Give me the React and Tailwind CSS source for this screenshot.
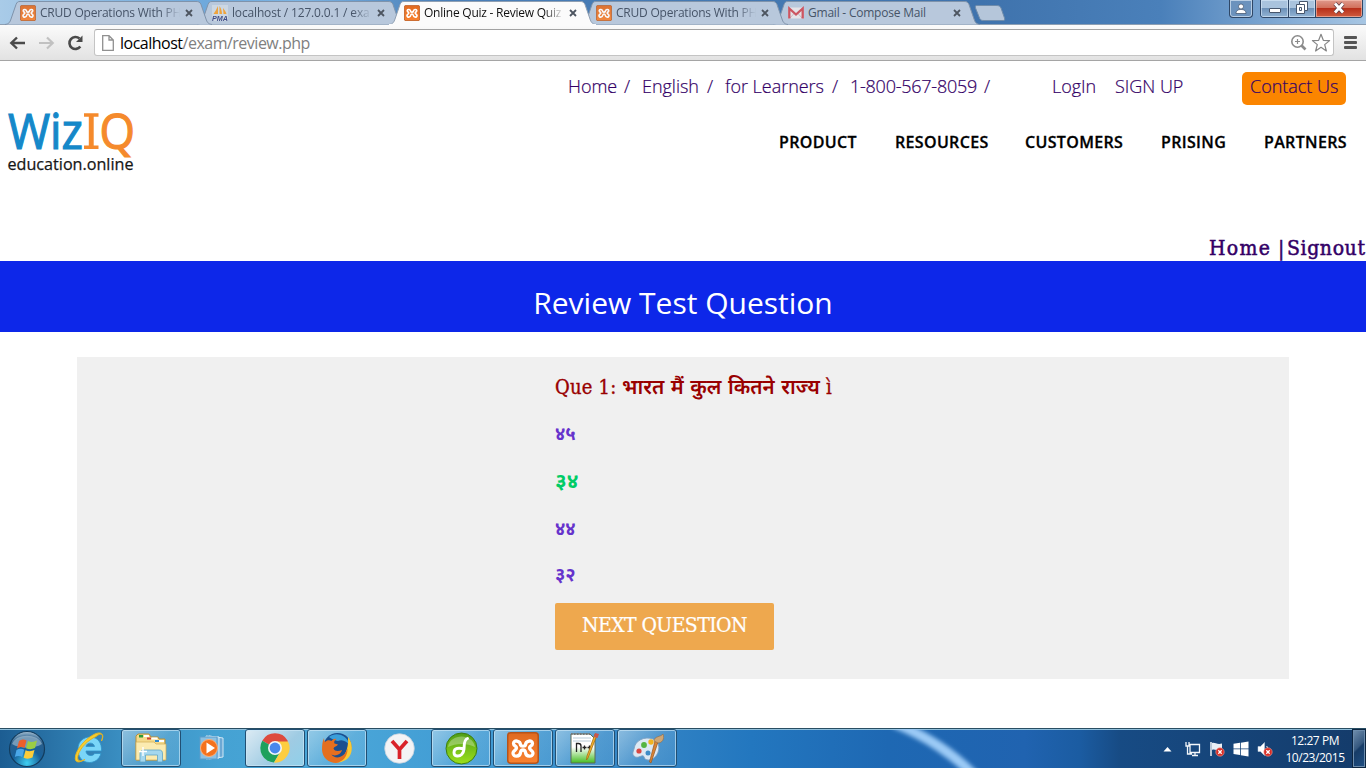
import React from "react";

function XamppIcon({ size }) {
  return (
    <svg width={size} height={size} viewBox="0 0 32 32" className="shrink-0">
      <defs>
        <linearGradient id="xo" x1="0" y1="0" x2="0" y2="1">
          <stop offset="0" stopColor="#e06a20" />
          <stop offset="1" stopColor="#f98230" />
        </linearGradient>
      </defs>
      <rect x="0.75" y="0.75" width="30.5" height="30.5" rx="3" fill="url(#xo)" stroke="#b5541b" strokeWidth="1.5" />
      <path
        d="M13.500 13C13.500 8.500 6.500 7.500 6.500 11.500C6.500 14 9.500 13.800 9.500 16C9.500 18.200 6 18.500 6 21C6 25.500 13 25 13.500 20.500C13.800 18.500 14.500 18 16 18C17.500 18 18.200 18.500 18.500 20.500C19 25 26 25.500 26 21C26 18.500 22.500 18.200 22.500 16C22.500 13.800 25.500 14 25.500 11.500C25.500 7.500 18.500 8.500 18.500 13C18.300 14 17.500 14.200 16 14.200C14.500 14.200 13.700 14 13.500 13"
        fill="none" stroke="#fff" strokeWidth="3.300" strokeLinejoin="round" strokeLinecap="round"
      />
    </svg>
  );
}

function PmaIcon() {
  return (
    <svg width="16" height="16" viewBox="0 0 16 16" className="shrink-0">
      <rect width="16" height="16" fill="#cfd9e4" />
      <path d="M6 1V9H1.500C3 7 4.500 4 6 1ZM7.500 1C9 3 10 6 10 9H7.500ZM11 3C12.500 5 14 7 14.500 9H11.500Z" fill="#f5a02c" />
      <text x="0" y="15.6" fontSize="7" fontWeight="700" fontStyle="italic" fill="#35427f" textLength="16" lengthAdjust="spacingAndGlyphs" fontFamily="Liberation Sans">PMA</text>
    </svg>
  );
}

function GmailIcon() {
  return (
    <svg width="16" height="16" viewBox="0 0 16 16" className="shrink-0">
      <rect x="0.500" y="2.500" width="15" height="11" fill="#e9e6ea" />
      <path d="M2 13L6.500 8M14 13L9.500 8" stroke="#c9a9b3" strokeWidth="0.8" />
      <path d="M1.300 13.500V3.500L8 9.500L14.700 3.500V13.500" fill="none" stroke="#cf4a55" strokeWidth="2.300" />
    </svg>
  );
}

const tabs = [
  { icon: "x", title: "CRUD Operations With PH", z: "z-[5]" },
  { icon: "p", title: "localhost / 127.0.0.1 / exa", z: "z-[4]" },
  { icon: "x", title: "Online Quiz - Review Quiz", active: true, z: "z-[6]" },
  { icon: "x", title: "CRUD Operations With PH", z: "z-[3]" },
  { icon: "g", title: "Gmail - Compose Mail", z: "z-[2]" },
];

function Tab({ icon, title, active, z }) {
  return (
    <div className={"relative w-[192px] h-[25px] flex items-center pl-3 shrink-0 " + z}>
      <svg className="absolute -left-1 top-0" width="212" height="26" viewBox="-4 0 212 26">
        <path
          d="M-3 24.500C1 24 2 22 3 19L8 4.500C9 2 10 1.500 12 1.500H188C190.500 1.500 192 2 193 4.500L198 19C199 22 200 24 204 24.500"
          fill={active ? "#fbfbfb" : "#b8c8dc"} stroke={active ? "#8f9fb2" : "#7f93ab"} strokeWidth="1"
        />
        {active && <rect x="-3" y="24" width="207" height="2" fill="#fbfbfb" />}
      </svg>
      <div className={"relative flex items-center " + (active ? "" : "opacity-90")}>
        {icon === "x" ? <XamppIcon size={16} /> : icon === "p" ? <PmaIcon /> : <GmailIcon />}
      </div>
      <div
        className={
          "relative ml-1 w-[140px] overflow-hidden whitespace-nowrap text-[12px] leading-[18px] " +
          (active ? "text-[#111] tracking-[-0.24px]" : icon === "p" ? "text-[#465468] tracking-[-0.16px]" : "text-[#465468] tracking-[-0.22px]") +
          (icon === "g" ? "" : " [mask-image:linear-gradient(90deg,#000_86%,transparent)]")
        }
      >
        {title}
      </div>
      <svg className="relative ml-[5px]" width="8" height="8" viewBox="0 0 8 8">
        <path d="M1 1L7 7M7 1L1 7" stroke="#4d5560" strokeWidth="1.800" />
      </svg>
    </div>
  );
}

function BrowserChrome() {
  return (
    <div className="h-[61px] font-['Open_Sans','Noto_Sans',sans-serif]">
      <div className="h-[24px] flex pl-2 bg-[linear-gradient(90deg,#a9cbe8_0,#6fa9dc_15%,#7db5e4_22%,#4a7fb8_32%,#3f73ad_72%,#4a80ba_85%,#8fb4da_96%,#a7c6e3_100%)]">
        {tabs.map((t, i) => <Tab key={i} {...t} />)}
        <svg className="mt-[4px] ml-[6px]" width="32" height="18" viewBox="0 0 32 18">
          <path d="M3 1.500H22C25 1.500 26 2 27 4L30.500 14C31 16 30.500 16.500 29 16.500H10C7.500 16.500 6 16 5.500 14L1.500 4C1 2 1.500 1.500 3 1.500Z" fill="#b5c6da" stroke="#6f8cab" />
        </svg>
        <div className="ml-auto mr-[3px] flex">
          <div className="w-6 h-[18px] mr-[7px] rounded-b-[4px] border border-t-0 border-[#2f4766] shadow-[inset_0_0_0_1px_#b7cde4] bg-[#6b92bd] flex items-center justify-center">
            <svg width="12" height="12" viewBox="0 0 12 12">
              <circle cx="6" cy="3.500" r="2.500" fill="#fff" stroke="#3b4c66" strokeWidth="0.700" />
              <path d="M1 10.500C1 7 4 6.500 6 6.500S11 7 11 10.500Z" fill="#fff" stroke="#3b4c66" strokeWidth="0.700" />
            </svg>
          </div>
          <div className="flex w-[103px] h-[18px] rounded-b-[4px] border border-t-0 border-[#2f4766] overflow-hidden">
            <div className="w-[28px] border-r border-[#2f4766] bg-[linear-gradient(#a9c3dd_45%,#6d91b8_50%,#93b4d4)] shadow-[inset_0_0_0_1px_rgba(220,235,250,0.6)] flex items-center justify-center">
              <div className="w-3 h-[5px] mt-[4px] bg-white border border-[#47566c] rounded-[1px]" />
            </div>
            <div className="w-[27px] border-r border-[#2f4766] bg-[linear-gradient(#a9c3dd_45%,#6d91b8_50%,#93b4d4)] shadow-[inset_0_0_0_1px_rgba(220,235,250,0.6)] flex items-center justify-center">
              <svg width="12" height="13" viewBox="0 0 12 13" className="-mt-[2px]">
                <path d="M3.500 0.500H11.500V9.500H8.500V12.500H0.500V3.500H3.500Z" fill="#fff" stroke="#47566c" />
                <path d="M3.500 6.500H5.500V9.500H3.500ZM3.500 3.500H8.500V9.500" fill="none" stroke="#47566c" />
              </svg>
            </div>
            <div className="flex-1 bg-[linear-gradient(#df9a8c_0,#d2715c_45%,#b8301a_50%,#cf5c3f)] shadow-[inset_0_0_0_1px_rgba(250,200,185,0.6)] flex items-center justify-center">
              <svg width="14" height="12" viewBox="0 0 14 12" className="-mt-[2px]">
                <path d="M3 1.500L11 10.500M11 1.500L3 10.500" stroke="#5b3b44" strokeWidth="4.200" />
                <path d="M3 1.500L11 10.500M11 1.500L3 10.500" stroke="#fff" strokeWidth="2.800" />
              </svg>
            </div>
          </div>
        </div>
      </div>
      <div className="h-[37px] border-t border-t-[#8d9fb3] border-b border-b-[#a5a5a5] bg-[linear-gradient(#fbfbfb,#e2e2e2)] flex items-center">
        <svg className="ml-[9px]" width="17" height="14" viewBox="0 0 17 14">
          <path d="M16 7H3M8 1.500L2.300 7L8 12.500" fill="none" stroke="#4a4a4a" strokeWidth="2.400" />
        </svg>
        <svg className="ml-[12px]" width="17" height="14" viewBox="0 0 17 14">
          <path d="M1 7H14M9 1.500L14.700 7L9 12.500" fill="none" stroke="#c1c1c1" strokeWidth="2.200" />
        </svg>
        <svg className="ml-[12px]" width="17" height="16" viewBox="0 0 17 16">
          <path d="M13.300 11.500A6 6 0 1 1 12.500 3.500" fill="none" stroke="#4a4a4a" strokeWidth="2.600" />
          <path d="M15.500 0.500V7H9Z" fill="#4a4a4a" />
        </svg>
        <div className="ml-[10px] w-[1240px] h-[27px] rounded-[3px] border border-[#c4c4c4] border-t-[#a2a2a2] bg-white flex items-center">
          <svg className="ml-[7px]" width="12" height="16" viewBox="0 0 12 16">
            <path d="M0.700 0.700H7L11.300 5V15.300H0.700ZM7 0.700V5H11.300" fill="#fff" stroke="#909090" strokeWidth="1.300" />
          </svg>
          <div className="ml-[6px] text-[16px] leading-[24px] tracking-[-0.5px] text-[#808080] whitespace-nowrap"><span className="text-black">localhost</span>/exam/review.php</div>
          <svg className="ml-auto" width="17" height="17" viewBox="0 0 17 17">
            <circle cx="7.500" cy="7.500" r="5.700" fill="none" stroke="#8b8b8b" strokeWidth="1.600" />
            <path d="M5 7.500H10M7.500 5V10" stroke="#8b8b8b" strokeWidth="1.200" />
            <path d="M11.500 11.500L15.500 15.500" stroke="#8b8b8b" strokeWidth="2.600" />
          </svg>
          <svg className="ml-[4px] mr-[2px]" width="20" height="20" viewBox="0 0 20 20">
            <path d="M10 1.300L12.300 7.300L18.600 7.600L13.700 11.600L15.400 18L10 14.300L4.600 18L6.300 11.600L1.400 7.600L7.700 7.300Z" fill="#fff" stroke="#858585" strokeWidth="1.200" strokeLinejoin="round" />
          </svg>
        </div>
        <div className="ml-[10px] flex flex-col gap-[2px]">
          <div className="w-[13px] h-[3px] rounded-[1px] bg-[#555]" />
          <div className="w-[13px] h-[3px] rounded-[1px] bg-[#555]" />
          <div className="w-[13px] h-[3px] rounded-[1px] bg-[#555]" />
        </div>
      </div>
    </div>
  );
}

function Logo() {
  return (
    <svg width="136" height="64" viewBox="0 0 136 64" className="shrink-0">
      <g fontFamily="Open Sans, Noto Sans, sans-serif" fontSize="50">
        <text x="8" y="38" fill="#1588c9" stroke="#1588c9" strokeWidth="1.200" textLength="75" lengthAdjust="spacingAndGlyphs">Wiz</text>
        <path d="M84 2.300H98.500V5.700H93.700V34.600H98.500V38H84V34.600H88.800V5.700H84Z" fill="#f58a2c" />
        <text x="99.500" y="38" fill="#f58a2c" stroke="#f58a2c" strokeWidth="1.200" textLength="35.500" lengthAdjust="spacingAndGlyphs">Q</text>
        <text x="7.500" y="59" fontSize="16.500" fill="#161616" stroke="#161616" strokeWidth="0.250" textLength="126" lengthAdjust="spacingAndGlyphs">education.online</text>
      </g>
    </svg>
  );
}

function Header() {
  return (
    <header className="h-[200px] flex flex-col">
      <div className="h-[50px] flex pt-[11px] pl-[568px] font-['Open_Sans','Noto_Sans',sans-serif] font-light text-[18px] leading-[28px] tracking-[-0.02px] text-[#330066] [-webkit-text-stroke:0.2px_#330066] whitespace-nowrap">
        <span className="w-[56px]">Home</span><span className="w-[18px]">/</span>
        <span className="w-[65px]">English</span><span className="w-[18px]">/</span>
        <span className="w-[107px]">for Learners</span><span className="w-[18px]">/</span>
        <span className="w-[134px] tracking-[-0.24px]">1-800-567-8059</span><span className="w-[68px]">/</span>
        <span className="w-[63px]">LogIn</span>
        <span className="w-[127px]">SIGN UP</span>
        <a className="w-[104px] h-[33px] rounded-[5px] bg-[#fb8500] pl-2">Contact Us</a>
      </div>
      <div className="flex h-[66px]">
        <Logo />
        <nav className="ml-[643px] pt-[18px] flex font-['Open_Sans','Noto_Sans',sans-serif] font-semibold text-[16px] leading-[26px] tracking-[0.34px] text-black [-webkit-text-stroke:0.3px_#000] whitespace-nowrap">
          <span className="w-[116px]">PRODUCT</span>
          <span className="w-[130px]">RESOURCES</span>
          <span className="w-[136px]">CUSTOMERS</span>
          <span className="w-[103px]">PRISING</span>
          <span>PARTNERS</span>
        </nav>
      </div>
      <div className="mt-auto h-[28px] pl-[1209px] flex font-['DejaVu_Serif_Condensed','DejaVu_Serif',serif] text-[21px] leading-[30px] tracking-[0.9px] text-[#330066] [-webkit-text-stroke:0.5px_#330066] whitespace-nowrap">
        <span className="w-[69px] tracking-[1.300px]">Home</span><span className="w-[9px]">|</span><span className="tracking-[0.6px]">Signout</span>
      </div>
    </header>
  );
}

const answers = [
  { text: "४५", cls: "h-[47px] text-[18.500px] text-[#6633cc]" },
  { text: "३४", cls: "h-[48px] text-[21px] text-[#00cc66]" },
  { text: "४४", cls: "h-[47px] text-[18.500px] text-[#6633cc]" },
  { text: "३२", cls: "h-[45px] text-[18.500px] text-[#6633cc]" },
];

function Quiz() {
  return (
    <>
      <div className="h-[71px] bg-[#0d27e9] flex justify-center pt-[21px] font-['Open_Sans','Noto_Sans',sans-serif] text-[30px] leading-[42px] text-white whitespace-nowrap">
        Review Test Question
      </div>
      <div className="mt-[25px] ml-[77px] w-[1212px] h-[322px] bg-[#f0f0f0] pl-[478px] pt-[16px] flex flex-col">
        <div className="h-[38px] flex leading-[28px] text-[20px] text-[#990000] whitespace-nowrap">
          <span className="w-[67px] tracking-[0.2px] [-webkit-text-stroke:0.35px_#990000] font-['DejaVu_Serif_Condensed','DejaVu_Serif',serif]">Que 1:</span>
          <span className="w-[204px] pt-[2px] text-[20.500px] [word-spacing:1.200px] font-['Noto_Sans_Devanagari','Noto_Sans',sans-serif] font-semibold">भारत मैं कुल कितने राज्य</span>
          <span className="[-webkit-text-stroke:0.35px_#990000] font-['DejaVu_Serif_Condensed','DejaVu_Serif',serif]">ì</span>
        </div>
        {answers.map((a) => (
          <div key={a.text} className={"flex items-center pt-[3px] font-bold font-['Noto_Sans_Devanagari','Noto_Sans',sans-serif] " + a.cls}>{a.text}</div>
        ))}
        <button className="mt-[5px] w-[219px] h-[47px] shrink-0 rounded-[2px] bg-[#eea84e] text-white font-['DejaVu_Serif_Condensed','DejaVu_Serif',serif] text-[21px] tracking-[-0.6px] [-webkit-text-stroke:0.2px_#fff] leading-[28px] pb-[3px] whitespace-nowrap">
          NEXT QUESTION
        </button>
      </div>
    </>
  );
}

const StartOrb = () => (
  <svg width="38" height="38" viewBox="0 0 38 38">
    <defs>
      <radialGradient id="orb" cx="0.500" cy="0.900" r="0.900">
        <stop offset="0" stopColor="#3fd0f2" /><stop offset="0.450" stopColor="#17609a" /><stop offset="0.800" stopColor="#2a5f8c" /><stop offset="1" stopColor="#a9c3d6" />
      </radialGradient>
    </defs>
    <circle cx="19" cy="19" r="17.500" fill="url(#orb)" stroke="#123c5e" strokeWidth="1.200" />
    <path d="M4 14C8 3 30 3 34 14C26 19 12 19 4 14Z" fill="#d5e4ee" opacity="0.450" />
    <path d="M11 11C14 9 16 9 18.500 10.500L16.500 18C14 16.500 12 17 9 18.500Z" fill="#ec5f2c" />
    <path d="M20 11C23 12.500 26 12 29 10.500L27 18C24 19.500 21 19.500 18 18.200Z" fill="#9bcd44" />
    <path d="M8.500 20C11 18.500 14 18.500 16.200 19.700L14.200 27C12 25.500 9 25.500 6.800 27Z" fill="#4aa7e8" />
    <path d="M17.600 20.200C20 21.500 23.500 21.500 26.500 20L24.500 27.500C21.500 29 18.500 29 15.600 27.700Z" fill="#fbcd3a" />
  </svg>
);

const IeIcon = () => (
  <svg width="34" height="34" viewBox="0 0 34 34">
    <path d="M6 18C6 10 12 6 18 6C26 6 30 12 29.500 20H14C14 25 21 26 22.500 22.500H29C27 29 22 31.500 17.500 31.500C10 31.500 6 26 6 18ZM14 15.500H22.500C22 11 14.500 11 14 15.500Z" fill="#7ad6f8" stroke="#2f93c9" strokeWidth="0.800" fillRule="evenodd" />
    <path d="M24 5.500C29 1 33 3 29.500 10C33 0 26 1 21 4C12 9 5 18 3.500 25C2 33 8 31.500 13 28.500C8 31 4.500 30.500 6 24.500C8 17 16 9 24 5.500Z" fill="#f8cf2d" stroke="#e3b324" strokeWidth="1" />
  </svg>
);

const FolderIcon = () => (
  <svg width="34" height="30" viewBox="0 0 34 30">
    <path d="M2 3L4 1H15L17 4H24L25 6H31V27H2Z" fill="#f4da8b" stroke="#b88e38" />
    <rect x="5" y="2" width="4" height="2.500" fill="#2b9b39" /><rect x="10" y="2" width="5" height="2" fill="#fff" />
    <rect x="13" y="4.500" width="4" height="2" fill="#cf4135" /><rect x="17.500" y="4.500" width="6" height="2" fill="#fff" />
    <rect x="21" y="7" width="4" height="2" fill="#2e88ce" /><rect x="25" y="7" width="5" height="2" fill="#fff" />
    <path d="M2 9H20L22 11H32V27H2Z" fill="#fbebb0" stroke="#d1ac54" strokeWidth="0.700" />
    <path d="M6 29V21C6 17.500 8 17 11 17H25C27.500 17 28.500 18 28.500 21V29H23.500V22H11.500V29Z" fill="#a4d7ee" stroke="#5fa3c5" strokeWidth="0.800" />
    <path d="M9 14V23M5 18.500H13" stroke="#fff" strokeWidth="1.400" />
  </svg>
);

const MediaIcon = () => (
  <svg width="28" height="26" viewBox="0 0 28 26">
    <path d="M10 1L24 3V22L10 24Z" fill="#6ca8d4" stroke="#d1e8f6" />
    <path d="M7 1L20 2V23L7 24Z" fill="#89bfe2" stroke="#dbeffa" />
    <rect x="1" y="2" width="17" height="22" fill="#8bc0e2" stroke="#5c9cc9" />
    <circle cx="10" cy="13" r="8.500" fill="#f4721d" stroke="#fbb079" />
    <path d="M7.500 7.500L16 13L7.500 18.500Z" fill="#fff" />
  </svg>
);

const ChromeIcon = () => (
  <svg width="30" height="30" viewBox="0 0 30 30">
    <path d="M15 15L2.300 7.700A14.600 14.600 0 0 1 27.700 7.700L27.700 9H15Z" fill="#dd4b3e" />
    <path d="M15 15L2.300 7.700A14.600 14.600 0 0 0 14 29.600L20.500 18.500Z" fill="#1fa15d" />
    <path d="M15 8.500H28A14.600 14.600 0 0 1 14 29.600L20.500 18.500Z" fill="#fdcd40" />
    <circle cx="15" cy="15" r="7" fill="#f3f6fa" /><circle cx="15" cy="15" r="5.400" fill="#4888ee" />
  </svg>
);

const FirefoxIcon = () => (
  <svg width="32" height="32" viewBox="0 0 32 32">
    <circle cx="16.500" cy="15" r="14" fill="#1b4f90" />
    <path d="M8 5C15 -1 27 3 29 14C26 9 21 7 17 9C14 8 12 8 8 5Z" fill="#3a9fda" />
    <path d="M27 5C32 11 32 20 28 25C23 31 15 31 13 30C23 28 28 18 27 5Z" fill="#fbc933" />
    <path d="M3 6C3 8 3.500 9 4 10C6 8 8.500 8 10.500 9C12 7 13.500 6.500 15.500 7C13 8.500 12.800 10.500 13.500 11.500L17 12.500C16 14.500 13 14.500 12.500 16.500C14 20 18 19 21 18C20 23 13 25 10 22C14 28 24 26 26.500 16C27 24 22 30 15 31C8 31 1.500 26 1 18C1 13 1.500 9 3 6Z" fill="#e56f1f" />
  </svg>
);

const YandexIcon = () => (
  <svg width="31" height="31" viewBox="0 0 31 31">
    <circle cx="15.500" cy="15.500" r="14.800" fill="#f3f3f5" stroke="#c5d0dc" strokeWidth="0.800" />
    <path d="M8 8L15.500 16.500L23 8M15.500 16V26" fill="none" stroke="#d9222a" strokeWidth="3.700" />
  </svg>
);

const DownloadIcon = () => (
  <svg width="33" height="33" viewBox="0 0 33 33">
    <defs><linearGradient id="dg" x1="0" y1="0" x2="0" y2="1"><stop offset="0" stopColor="#4f9d18" /><stop offset="1" stopColor="#9be01b" /></linearGradient></defs>
    <circle cx="16.500" cy="16.500" r="15.500" fill="url(#dg)" stroke="#3c7d12" />
    <path d="M3 15C5 1 28 1 30 15C22 11 11 11 3 15Z" fill="#fff" opacity="0.300" />
    <path d="M22.500 6.500C18.500 8 19.500 13 19 17C18.500 22 15.500 24.500 12 24C8 23.500 8 17.500 12 16.500C14.500 16 17 16.500 19 17.500" fill="none" stroke="#fff" strokeWidth="2.900" strokeLinecap="round" strokeLinejoin="round" />
  </svg>
);

const NotepadIcon = () => (
  <svg width="32" height="32" viewBox="0 0 32 32">
    <defs><linearGradient id="ng" x1="0" y1="0" x2="0" y2="1"><stop offset="0.450" stopColor="#fff" /><stop offset="1" stopColor="#45bd20" /></linearGradient></defs>
    <path d="M2 2H21L26 7V31H2Z" fill="url(#ng)" stroke="#5c6b56" />
    <path d="M2 2H21" stroke="#777" strokeWidth="2" strokeDasharray="1.500 1.500" />
    <path d="M4 6H22M4 9H22" stroke="#b8cbd8" />
    <path d="M7.500 20V11.500H9.500C11.500 11.500 12 12.500 12 14V20M13.500 15.500H17.500M15.500 13.500V17.500M18.500 15.500H22.500M20.500 13.500V17.500" fill="none" stroke="#222" strokeWidth="1.300" />
    <path d="M28 3L19 26L17.500 28L18 24L26 2Z" fill="#f5b52d" stroke="#a56b13" strokeWidth="0.800" />
    <path d="M26 1L30 2L28.500 6L25 5Z" fill="#c9564d" />
  </svg>
);

const PaintIcon = () => (
  <svg width="33" height="32" viewBox="0 0 33 32">
    <path d="M3 17C4 8 14 4 22 7C30 10 29 20 24 25C20 29 14 29 13 25C12 21 7 28 3 24C1 22 2 20 3 17Z" fill="#dce9f4" stroke="#7c9fc1" strokeWidth="0.900" />
    <circle cx="17" cy="21" r="2.500" fill="#3d8cc7" />
    <circle cx="8" cy="19" r="2.600" fill="#d94843" /><circle cx="13" cy="13" r="2.900" fill="#55b541" /><circle cx="20" cy="10" r="2.700" fill="#f1b322" />
    <path d="M27 10L20 31L18.500 30L24 9Z" fill="#d98334" stroke="#96551c" strokeWidth="0.700" />
    <path d="M23 9C23 4 30 5 32 2C34 7 31 11 27 11Z" fill="#cda675" stroke="#956b42" strokeWidth="0.600" />
  </svg>
);

const apps = [
  { Icon: IeIcon }, { Icon: FolderIcon, open: true }, { Icon: MediaIcon }, { Icon: ChromeIcon, open: true, current: true },
  { Icon: FirefoxIcon, open: true }, { Icon: YandexIcon }, { Icon: DownloadIcon, open: true },
  { Icon: () => <XamppIcon size={32} />, open: true }, { Icon: NotepadIcon, open: true }, { Icon: PaintIcon, open: true },
];

const ErrorDot = () => (
  <g>
    <circle cx="11" cy="11" r="4.200" fill="#d92c24" stroke="#f0a29b" strokeWidth="0.600" />
    <path d="M9.300 9.300L12.700 12.700M12.700 9.300L9.300 12.700" stroke="#fff" strokeWidth="1.300" />
  </g>
);

function Taskbar() {
  return (
    <div className="relative h-[40px] overflow-hidden border-t border-[#294e63] shadow-[inset_0_1px_0_#8fbfdb] bg-[linear-gradient(90deg,#1c5d92_0,#2a74a8_4%,#3a8fc2_9%,#45a2d3_16%,#4aa6d8_25%,#409bd4_35%,#3586c6_46%,#2377bf_55%,#1e68b3_65%,#2063b0_75%,#1b5ca2_79%,#174b84_82%,#143b6a_100%)] flex">
      <svg className="absolute left-[870px] top-0" width="130" height="40" viewBox="0 0 130 40">
        <defs><filter id="soft"><feGaussianBlur stdDeviation="2" /></filter></defs>
        <path d="M24 -6C58 8 82 24 106 48" fill="none" stroke="#9bcaf6" strokeWidth="10" filter="url(#soft)" />
      </svg>
      <div className="relative w-[58px] pl-[8px] pt-px"><StartOrb /></div>
      <div className="relative flex">
        {apps.map(({ Icon, open, current }, i) => (
          <div key={i} className="w-[62px] flex justify-center">
            <div
              className={
                "w-[60px] h-[38px] flex items-center justify-center " +
                (open ? "rounded-[3px] border border-[#214f73] shadow-[inset_0_0_0_1px_rgba(205,232,247,0.65)] " : "") +
                (current ? "bg-[linear-gradient(135deg,#dcebf4,#9fcbe3_60%,#8fd0ea)]" : open ? "bg-[linear-gradient(135deg,rgba(210,232,244,0.55),rgba(160,205,232,0.25)_55%,rgba(160,205,232,0.15))]" : "")
              }
            >
              <Icon />
            </div>
          </div>
        ))}
      </div>
      <div className="relative ml-auto flex items-center pt-px">
        <svg width="9" height="5" viewBox="0 0 9 5" className="mr-[13px]"><path d="M4.500 0L8.500 4.500H0.500Z" fill="#fff" /></svg>
        <svg width="16" height="16" viewBox="0 0 16 16">
          <path d="M1 1V5H4V1M2.500 5V13H7M5 3.500H14.500V11.500H5ZM7 14.500H13M10 11.500V14.500" fill="none" stroke="#f2f6fa" strokeWidth="1.300" />
        </svg>
        <svg width="16" height="16" viewBox="0 0 16 16" className="ml-2">
          <path d="M2 1V15" stroke="#fff" strokeWidth="1.400" /><path d="M3 2C6 1 8 4 13 2.500V9C9 11 6 7.500 3 9Z" fill="#e9eff6" />
          <ErrorDot />
        </svg>
        <svg width="16" height="16" viewBox="0 0 16 16" className="ml-2">
          <path d="M0.500 2.800L7 1.800V7.400H0.500ZM7.800 1.700L15.500 0.500V7.400H7.800ZM0.500 8.300H7V14L0.500 13ZM7.800 8.300H15.500V15.400L7.800 14.200Z" fill="#fff" />
        </svg>
        <svg width="16" height="16" viewBox="0 0 16 16" className="ml-2">
          <path d="M1 5.500H3.500L7.500 1.500V14.500L3.500 10.500H1Z" fill="#fff" stroke="#c5d3e2" strokeWidth="0.500" />
          <path d="M9.500 5C10.500 6 10.500 7 10.500 8" fill="none" stroke="#fff" />
          <ErrorDot />
        </svg>
      </div>
      <div className="relative ml-[10px] w-[64px] flex flex-col items-center pt-[3px] text-white text-[12px] leading-[17px] tracking-[-0.45px] whitespace-nowrap font-['Open_Sans','Noto_Sans',sans-serif]">
        <span>12:27 PM</span>
        <span>10/23/2015</span>
      </div>
      <div className="relative ml-[5px] w-[14px] border border-[#0c2540] shadow-[inset_0_0_0_1px_#6c8cac] bg-[linear-gradient(135deg,#7290ae_0,#35587f_45%,#173c67_50%,#1f4f83)]" />
    </div>
  );
}

export default function App() {
  return (
    <div className="w-[1366px] h-[768px] overflow-hidden bg-white flex flex-col">
      <BrowserChrome />
      <main className="h-[667px]">
        <Header />
        <Quiz />
      </main>
      <Taskbar />
    </div>
  );
}
